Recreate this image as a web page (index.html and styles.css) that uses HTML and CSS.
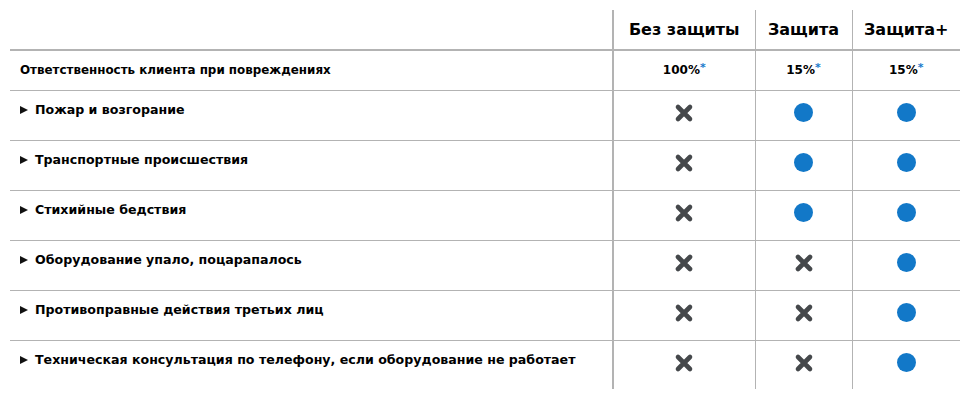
FILE: index.html
```html
<!DOCTYPE html>
<html lang="ru">
<head>
<meta charset="utf-8">
<link rel="stylesheet" href="styles.css">
</head>
<body>
<table class="cmp">
  <colgroup>
    <col class="c-label"><col class="c-none"><col class="c-prot"><col class="c-plus">
  </colgroup>
  <thead>
    <tr class="head">
      <th></th>
      <th class="plan first">Без защиты</th>
      <th class="plan">Защита</th>
      <th class="plan">Защита+</th>
    </tr>
  </thead>
  <tbody>
    <tr class="resp">
      <td class="label">Ответственность клиента при повреждениях</td>
      <td class="val first">100%<sup>*</sup></td>
      <td class="val">15%<sup>*</sup></td>
      <td class="val">15%<sup>*</sup></td>
    </tr>
    <tr class="row">
      <td class="label"><span class="tri"></span>Пожар и возгорание</td>
      <td class="mark first"><svg class="x" viewBox="0 0 20 20"><path d="M4 4L16 16M16 4L4 16"/></svg></td>
      <td class="mark"><span class="dot"></span></td>
      <td class="mark"><span class="dot"></span></td>
    </tr>
    <tr class="row">
      <td class="label"><span class="tri"></span>Транспортные происшествия</td>
      <td class="mark first"><svg class="x" viewBox="0 0 20 20"><path d="M4 4L16 16M16 4L4 16"/></svg></td>
      <td class="mark"><span class="dot"></span></td>
      <td class="mark"><span class="dot"></span></td>
    </tr>
    <tr class="row">
      <td class="label"><span class="tri"></span>Стихийные бедствия</td>
      <td class="mark first"><svg class="x" viewBox="0 0 20 20"><path d="M4 4L16 16M16 4L4 16"/></svg></td>
      <td class="mark"><span class="dot"></span></td>
      <td class="mark"><span class="dot"></span></td>
    </tr>
    <tr class="row">
      <td class="label"><span class="tri"></span>Оборудование упало, поцарапалось</td>
      <td class="mark first"><svg class="x" viewBox="0 0 20 20"><path d="M4 4L16 16M16 4L4 16"/></svg></td>
      <td class="mark"><svg class="x" viewBox="0 0 20 20"><path d="M4 4L16 16M16 4L4 16"/></svg></td>
      <td class="mark"><span class="dot"></span></td>
    </tr>
    <tr class="row">
      <td class="label"><span class="tri"></span>Противоправные действия третьих лиц</td>
      <td class="mark first"><svg class="x" viewBox="0 0 20 20"><path d="M4 4L16 16M16 4L4 16"/></svg></td>
      <td class="mark"><svg class="x" viewBox="0 0 20 20"><path d="M4 4L16 16M16 4L4 16"/></svg></td>
      <td class="mark"><span class="dot"></span></td>
    </tr>
    <tr class="row last">
      <td class="label"><span class="tri"></span>Техническая консультация по телефону, если оборудование не работает</td>
      <td class="mark first"><svg class="x" viewBox="0 0 20 20"><path d="M4 4L16 16M16 4L4 16"/></svg></td>
      <td class="mark"><svg class="x" viewBox="0 0 20 20"><path d="M4 4L16 16M16 4L4 16"/></svg></td>
      <td class="mark"><span class="dot"></span></td>
    </tr>
  </tbody>
</table>
</body>
</html>
```

FILE: styles.css
```css
html, body {
  margin: 0;
  padding: 0;
  background: #fff;
}
body {
  padding: 10px 10px 0 10px;
  font-family: "DejaVu Sans", "Noto Sans", sans-serif;
  color: #000;
}
.cmp {
  width: 950px;
  border-collapse: collapse;
  table-layout: fixed;
}
.c-label { width: 603px; }
.c-none { width: 142px; }
.c-prot { width: 97px; }
.c-plus { width: 108px; }

.cmp th, .cmp td {
  padding: 0;
  box-sizing: border-box;
}
.head { height: 40px; }
.head th {
  font-size: 16px;
  font-weight: 700;
  text-align: center;
  vertical-align: middle;
  border-bottom: 2px solid #b3b3b3;
}
.head th + th { border-left: 1px solid #b3b3b3; }
.cmp .first { border-left: 2px solid #b3b3b3; }

.resp { height: 40px; }
.resp td {
  vertical-align: middle;
  border-bottom: 1px solid #b3b3b3;
}
.row { height: 50px; }
.row td {
  vertical-align: top;
  border-bottom: 1px solid #b3b3b3;
}
.row.last { height: 49px; }
.row.last td { border-bottom: none; }
td + td { border-left: 1px solid #b3b3b3; }

.label {
  font-size: 11.9px;
  font-weight: 700;
  padding-left: 10px !important;
  white-space: nowrap;
}
.row .label {
  font-size: 12.6px;
  padding-top: 10px !important;
  line-height: 18px;
}
.tri {
  display: inline-block;
  width: 0;
  height: 0;
  border-left: 8px solid #111;
  border-top: 4.5px solid transparent;
  border-bottom: 4.5px solid transparent;
  margin-right: 7px;
  vertical-align: 0;
}
.val {
  text-align: center;
  font-size: 12px;
  font-weight: 700;
}
.val sup {
  color: #1a7bcc;
  font-size: 11px;
  vertical-align: 3px;
  line-height: 0;
}
.mark {
  text-align: center;
  padding-top: 12px !important;
}
.x {
  width: 20px;
  height: 20px;
  display: inline-block;
  vertical-align: top;
}
.x path {
  stroke: #45484b;
  stroke-width: 4.6;
  stroke-linecap: round;
  fill: none;
}
.dot {
  display: inline-block;
  width: 19px;
  height: 19px;
  border-radius: 50%;
  background: #1278c8;
  vertical-align: top;
}
```
